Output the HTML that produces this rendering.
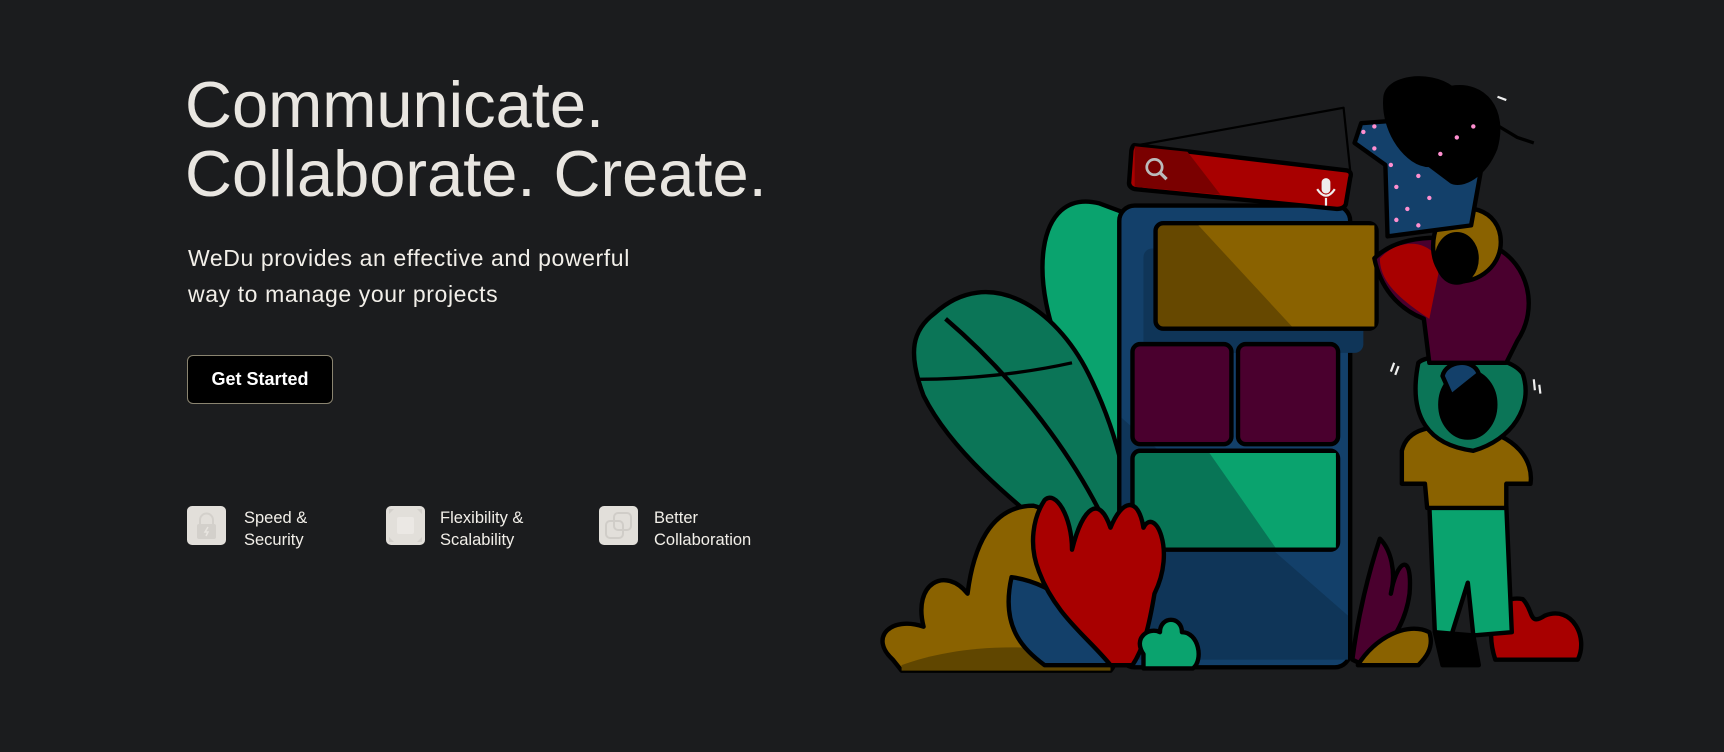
<!DOCTYPE html>
<html><head><meta charset="utf-8"><style>
html,body{margin:0;padding:0;background:#1b1c1e;width:1724px;height:752px;overflow:hidden;font-family:"Liberation Sans",sans-serif;color:#ebe8e3}
h1{position:absolute;left:185px;top:70px;margin:0;font-weight:400;font-size:65px;line-height:69px;letter-spacing:0px;color:#e9e6e1;white-space:nowrap}
p{position:absolute;left:188px;top:240px;margin:0;font-size:23px;line-height:36px;color:#f2efe9;letter-spacing:0.6px;white-space:nowrap}
.btn{position:absolute;left:187px;top:355px;width:144px;height:47px;background:#000;border:1px solid #8a8470;border-radius:6px;color:#fff;font-weight:700;font-size:18px;line-height:47px;text-align:center}
.f{position:absolute;top:506px;height:40px}
.f .ic{position:absolute;left:0;top:0;width:39px;height:39px;background:#e2dfda;border-radius:5px}
.f .t{position:absolute;top:1px;font-size:16.5px;line-height:22px;color:#f2efe9;white-space:nowrap}
svg.il{position:absolute;left:0;top:0}
</style></head><body>
<h1>Communicate.<br>Collaborate. Create.</h1>
<p>WeDu provides an effective and powerful<br>way to manage your projects</p>
<div class="btn">Get Started</div>
<div class="f" style="left:187px"><div class="ic"><svg width="39" height="39"><path d="M13 18v-4a6.5 6.5 0 0 1 13 0v4" fill="none" stroke="#d3d0cb" stroke-width="2"/><rect x="10" y="18" width="19" height="15" rx="2" fill="#d3d0cb"/><path d="M21 21l-3 5h3l-2 4" stroke="#e8e5e0" fill="none" stroke-width="1.5"/></svg></div><div class="t" style="left:57px">Speed &amp;<br>Security</div></div>
<div class="f" style="left:386px"><div class="ic"><svg width="39" height="39"><rect x="11" y="11" width="17" height="17" rx="2" fill="#ebe8e4"/><path d="M3 3l5 0 -5 5z M36 3l-5 0 5 5z M3 36l5 0-5-5z M36 36l-5 0 5-5z" fill="#d3d0cb"/></svg></div><div class="t" style="left:54px">Flexibility &amp;<br>Scalability</div></div>
<div class="f" style="left:599px"><div class="ic"><svg width="39" height="39"><rect x="15" y="7" width="17" height="17" rx="4" fill="none" stroke="#d0cdc8" stroke-width="2"/><rect x="7" y="15" width="17" height="17" rx="4" fill="none" stroke="#d0cdc8" stroke-width="2"/></svg></div><div class="t" style="left:55px">Better<br>Collaboration</div></div>

<svg class="il" width="1724" height="752" viewBox="0 0 1568 684" preserveAspectRatio="none">
<g stroke="#000" stroke-width="4" stroke-linejoin="round">
<path d="M1000 185 C940 170 935 260 970 330 C1000 390 1020 420 1030 440 L1040 200 Z" fill="#0aa36e"/>
<path d="M850 285 C900 240 960 280 990 340 C1020 400 1030 460 1030 500 L1000 520 C940 470 870 420 840 360 C825 320 830 300 850 285 Z" fill="#0b7557"/>
<path d="M860 290 C930 350 990 430 1020 510" fill="none"/>
<path d="M835 345 C880 345 930 340 975 330" fill="none" stroke-width="3"/>
<rect x="1018" y="187" width="210" height="420" rx="14" fill="#13406a"/>
<path d="M1020 380 L1020 600 L1226 600 L1226 560 Z" fill="#0f3558" stroke="none"/>
<rect x="1040" y="226" width="200" height="95" rx="8" fill="#0f3558" stroke="none"/>
<rect x="1051" y="203" width="201" height="96" rx="7" fill="#664800"/>
<path d="M1090 205 L1250 205 L1250 297 L1175 297 Z" fill="#8a6200" stroke="none"/>
<rect x="1030" y="313" width="90" height="91" rx="7" fill="#4a002e"/>
<rect x="1126" y="313" width="91" height="91" rx="7" fill="#4a002e"/>
<rect x="1030" y="410" width="187" height="90" rx="7" fill="#087556"/>
<path d="M1100 412 L1215 412 L1215 498 L1160 498 Z" fill="#0aa36e" stroke="none"/>
<path d="M1032 132 L1225 155 Q1230 156 1228 162 L1224 186 Q1222 190 1216 190 L1032 172 Q1026 170 1027 165 L1029 137 Q1030 132 1032 132Z" fill="#a80000"/>
<path d="M1032 133 L1080 138 L1110 177 L1032 170Z" fill="#7a0000" stroke="none"/>
<circle cx="1050" cy="152" r="7" fill="none" stroke="#bbb" stroke-width="2.5"/>
<path d="M1055 157 L1061 163" stroke="#bbb" stroke-width="3"/>
<rect x="1202" y="162" width="8" height="14" rx="4" fill="#eee" stroke="none"/>
<path d="M1198 172 Q1206 184 1214 172 M1206 180 L1206 187" fill="none" stroke="#eee" stroke-width="2"/>
<path d="M1035 132 L1222 98 L1228 155" fill="none" stroke-width="2"/>
<path d="M812 600 C790 580 810 560 840 570 C830 530 860 515 880 540 C885 500 900 460 940 460 C980 470 970 520 990 560 C1010 580 1020 600 1010 610 L820 610 Z" fill="#8a6200"/>
<path d="M820 605 C860 590 930 580 1010 600 L1010 610 L820 610Z" fill="#604600" stroke="none"/>
<path d="M920 525 C960 530 990 560 1030 605 L950 605 C930 590 910 570 920 525Z" fill="#13406a"/>
<path d="M950 455 C960 445 975 470 975 500 C985 460 1000 450 1010 480 C1020 455 1035 450 1040 480 C1050 460 1070 500 1050 540 C1045 570 1040 590 1030 605 L1010 605 C990 580 960 560 945 520 C935 495 940 470 950 455Z" fill="#a80000"/>
<path d="M1040 595 C1030 580 1045 570 1055 575 C1055 560 1075 560 1075 575 C1090 575 1095 600 1085 608 L1040 608Z" fill="#0aa36e"/>
<path d="M1230 600 C1235 560 1245 520 1255 490 C1265 500 1270 520 1265 540 C1270 510 1285 500 1282 540 C1278 570 1260 595 1240 605Z" fill="#4a002e"/>
<path d="M1235 605 C1250 580 1280 565 1300 575 C1305 590 1295 600 1290 605Z" fill="#8a6200"/>
<path d="M1360 600 C1350 570 1360 540 1385 545 C1395 555 1390 570 1405 560 C1430 550 1445 580 1435 600Z" fill="#a80000"/>
<path d="M1300 460 L1370 460 L1375 575 L1340 578 L1335 530 L1320 578 L1305 575Z" fill="#0aa36e"/>
<path d="M1305 575 L1340 578 L1345 605 L1312 605Z" fill="#000"/>
<path d="M1275 410 C1280 390 1300 385 1340 390 C1380 395 1395 420 1392 440 L1370 440 L1370 462 L1298 462 L1296 440 L1275 440Z" fill="#8a6200"/>
<path d="M1290 330 C1300 320 1370 318 1385 340 C1395 370 1375 400 1340 410 C1300 405 1280 380 1290 330Z" fill="#0b7557"/>
<ellipse cx="1335" cy="368" rx="25" ry="30" fill="#000"/>
<path d="M1312 342 C1315 328 1340 325 1345 340 L1320 360Z" fill="#13406a"/>
<path d="M1250 235 C1270 215 1310 210 1360 225 C1390 240 1400 280 1380 310 L1370 330 L1300 330 L1295 290 C1270 280 1255 260 1250 235Z" fill="#4a002e"/>
<path d="M1255 235 C1270 218 1300 215 1310 240 L1300 290 C1270 270 1255 255 1255 235Z" fill="#a80000" stroke="none"/>
<path d="M1310 200 C1330 180 1365 190 1365 220 C1365 245 1340 260 1320 255 C1300 245 1300 215 1310 200Z" fill="#8a6200"/>
<ellipse cx="1325" cy="235" rx="18" ry="22" fill="#000"/>
<path d="M1265 110 C1280 95 1320 95 1340 105 L1355 110 L1338 205 L1262 215 L1260 150 L1232 130 L1238 112Z" fill="#13406a"/>
<path d="M1260 90 C1260 70 1300 65 1320 80 C1350 75 1370 100 1360 135 C1350 160 1330 170 1320 165 L1300 150 C1280 150 1258 120 1260 90Z" fill="#000"/>
<path d="M1355 110 L1380 125 L1395 130" fill="none" stroke-width="3"/>
</g>
<g fill="#ff8fd0">
<circle cx="1240" cy="120" r="2"/><circle cx="1250" cy="135" r="2"/><circle cx="1265" cy="150" r="2"/><circle cx="1270" cy="170" r="2"/><circle cx="1280" cy="190" r="2"/><circle cx="1290" cy="160" r="2"/><circle cx="1300" cy="180" r="2"/><circle cx="1310" cy="140" r="2"/><circle cx="1325" cy="125" r="2"/><circle cx="1340" cy="115" r="2"/><circle cx="1270" cy="200" r="2"/><circle cx="1290" cy="205" r="2"/><circle cx="1250" cy="115" r="2"/>
</g>
<g stroke="#eee" stroke-width="2" fill="none">
<path d="M1268 330 l-3 8 M1272 333 l-3 8"/><path d="M1395 345 l1 10 M1400 350 l1 8"/><path d="M1362 88 l8 3"/>
</g>
</svg>
</body></html>
